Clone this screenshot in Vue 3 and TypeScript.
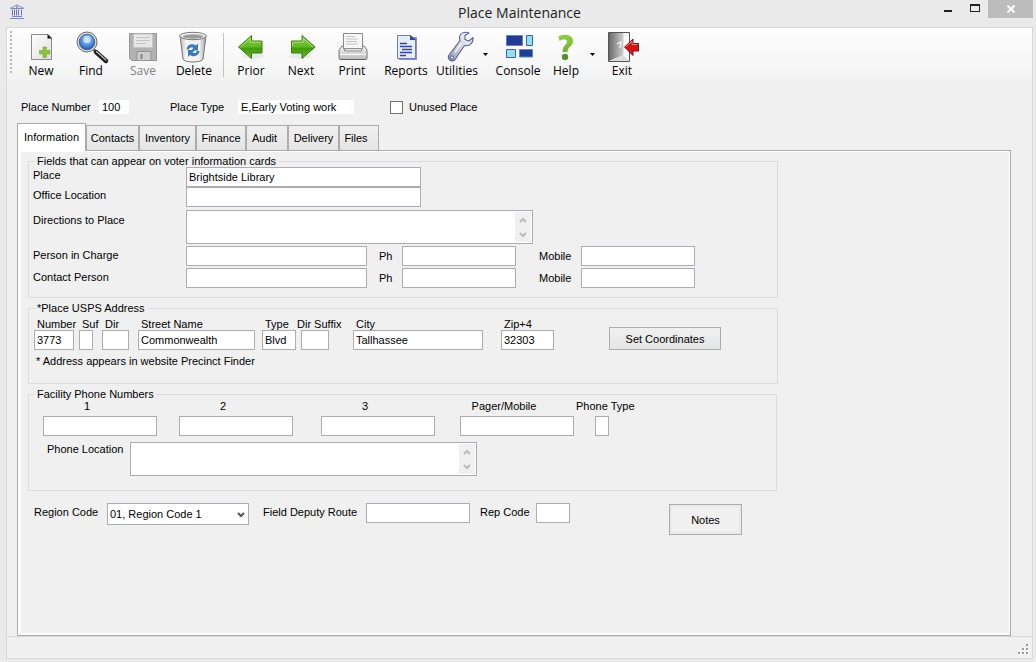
<script setup lang="ts">
import { ref } from 'vue'

interface Tab {
  name: string
  size: string
}

const tabs: Tab[] = [
  { name: 'Information', size: 'w-info' },
  { name: 'Contacts', size: 'w-contacts' },
  { name: 'Inventory', size: 'w-inventory' },
  { name: 'Finance', size: 'w-finance' },
  { name: 'Audit', size: 'w-audit' },
  { name: 'Delivery', size: 'w-delivery' },
  { name: 'Files', size: 'w-files' },
]
const activeTab = ref<string>('Information')

const placeNumber = ref('100')
const placeType = ref('E,Early Voting work')
const unused = ref(false)
const place = ref('Brightside Library')
const office = ref('')
const directions = ref('')
const phoneLocation = ref('')
const region = ref('01, Region Code 1')

const people = [
  { id: 'charge', label: 'Person in Charge' },
  { id: 'contact', label: 'Contact Person' },
]

const address = ref([
  { id: 'number', label: 'Number', value: '3773' },
  { id: 'suf', label: 'Suf', value: '' },
  { id: 'dir', label: 'Dir', value: '' },
  { id: 'street', label: 'Street Name', value: 'Commonwealth' },
  { id: 'type', label: 'Type', value: 'Blvd' },
  { id: 'dirsuffix', label: 'Dir Suffix', value: '' },
  { id: 'city', label: 'City', value: 'Tallhassee' },
  { id: 'zip', label: 'Zip+4', value: '32303' },
])

const phones = [
  { id: 'phone1', label: '1' },
  { id: 'phone2', label: '2' },
  { id: 'phone3', label: '3' },
  { id: 'pager', label: 'Pager/Mobile' },
  { id: 'phonetype', label: 'Phone Type' },
]
</script>

<template>
  <div class="window">
    <header class="titlebar">
      <svg class="app-icon" width="16" height="16" viewBox="0 0 16 16" aria-hidden="true">
        <path d="M1 5.5 8 2l7 3.500M2 5.500h12M3 13.500h10M1 15.500h14" fill="none" stroke="#7f8bc0" stroke-width="1" />
        <path d="M3.500 6.500v6M5.500 6.500v6M7.500 6.500v6M9.500 6.500v6M12.500 6.500v6" stroke="#6674b4" />
        <circle cx="8" cy="4" r="1" fill="#7582ba" />
      </svg>
      <h1>Place Maintenance</h1>
      <div class="win-controls">
        <button type="button" class="win-min" aria-label="Minimize">
          <svg width="8" height="14" viewBox="0 0 8 14"><path d="M0 10h8v2H0z" fill="#222" /></svg>
        </button>
        <button type="button" class="win-max" aria-label="Maximize">
          <svg width="10" height="14" viewBox="0 0 10 14"><path d="M0 4h10v8H0zM1 6v5h8V6z" fill="#222" fill-rule="evenodd" /></svg>
        </button>
        <button type="button" class="win-close" aria-label="Close">
          <svg width="8" height="8" viewBox="0 0 8 8"><path d="M.5.5l7 7M7.500.5l-7 7" stroke="#fff" stroke-width="2" /></svg>
        </button>
      </div>
    </header>

    <div class="frame">
      <nav class="toolbar" aria-label="Main toolbar">
        <span class="grip"></span>
        <button type="button" class="tool">
          <svg viewBox="0 0 32 32">
            <defs>
              <linearGradient id="paper" x1="0" y1="0" x2="1" y2="1"><stop offset="0" stop-color="#fff" /><stop offset="1" stop-color="#dedede" /></linearGradient>
            </defs>
            <path d="M6.500 3.500H23l3.500 3.500v21.500h-20z" fill="url(#paper)" stroke="#8b8b8b" />
            <path d="M22.500 3v4.500H27z" fill="#161616" />
            <path d="M18 16h3.500v3.500H25V23h-3.500v3.500H18V23h-3.500v-3.500H18z" fill="#8cc63f" stroke="#6fa82b" stroke-width=".6" />
          </svg>
          <span>New</span>
        </button>
        <button type="button" class="tool">
          <svg viewBox="0 0 32 32">
            <defs>
              <radialGradient id="lens" cx=".5" cy=".35" r=".65"><stop offset="0" stop-color="#bcdcfa" /><stop offset=".5" stop-color="#5e9be0" /><stop offset="1" stop-color="#1f56a6" /></radialGradient>
            </defs>
            <path d="M18.500 18.500l3 3" stroke="#777" stroke-width="3" />
            <path d="M21 21l10 9" stroke="#1e1e1e" stroke-width="4.400" stroke-linecap="round" />
            <path d="M21.500 20.500l9.500 8.600" stroke="#c6c6c6" stroke-width="1.200" stroke-linecap="round" />
            <circle cx="12" cy="11" r="10" fill="#dcdcdc" stroke="#6d6d6d" />
            <circle cx="12" cy="11" r="7.800" fill="url(#lens)" stroke="#305c9c" stroke-width=".8" />
            <rect x="8.500" y="5" width="7" height="7" rx="2.500" fill="#e3f2ff" opacity=".65" />
          </svg>
          <span>Find</span>
        </button>
        <button type="button" class="tool" disabled>
          <svg viewBox="0 0 32 32">
            <path d="M2.500 2.500h27v27H5l-2.500-2z" fill="#b2b2b2" stroke="#979797" />
            <path d="M6.500 3h19v13.500h-19z" fill="#e7e7e7" stroke="#c6c6c6" />
            <path d="M9 6.500h14M9 9.500h14M9 12.500h10" stroke="#c4c4c4" />
            <path d="M10 20.500h14v9H10z" fill="#cdcdcd" stroke="#949494" />
            <path d="M12.500 22.500h4v6h-4z" fill="#989898" stroke="#e1e1e1" stroke-width=".7" />
          </svg>
          <span>Save</span>
        </button>
        <button type="button" class="tool">
          <svg viewBox="0 0 32 32">
            <defs>
              <linearGradient id="bin"><stop offset="0" stop-color="#bcbcbc" /><stop offset=".25" stop-color="#f6f6f6" /><stop offset=".75" stop-color="#efefef" /><stop offset="1" stop-color="#a5a5a5" /></linearGradient>
            </defs>
            <path d="M2 5l3 23c1 4 19 4 20 0l3-23z" fill="url(#bin)" stroke="#777" />
            <ellipse cx="15" cy="5" rx="13.300" ry="3.700" fill="#f4f4f4" stroke="#777" />
            <ellipse cx="15" cy="5.500" rx="10.500" ry="2.200" fill="#9b9b9b" />
            <path d="M8 15h14l-1 10H9z" fill="#fff" opacity=".7" />
            <path d="M8.500 18.500c.5-5 6-6.500 9.500-4l2-2v7h-7l2.500-2.500c-2-1-4-.5-4.500 1.500zM21.500 20c-.5 5-6 6.500-9.500 4l-2 2v-7h7l-2.500 2.500c2 1 4 .5 4.500-1.500z" fill="#3d78b8" />
          </svg>
          <span>Delete</span>
        </button>
        <span class="divider"></span>
        <button type="button" class="tool">
          <svg viewBox="0 0 32 32">
            <defs>
              <linearGradient id="green" x1="0" y1="0" x2="0" y2="1"><stop offset="0" stop-color="#8bd24a" /><stop offset=".5" stop-color="#62b720" /><stop offset=".55" stop-color="#43980d" /><stop offset="1" stop-color="#62bd22" /></linearGradient>
            </defs>
            <ellipse cx="18" cy="25" rx="11" ry="3" fill="#000" opacity=".06" />
            <path d="M3.500 16 16.500 4.500V10h10.500v12H16.500v5.500z" fill="url(#green)" stroke="#3b7a16" stroke-linejoin="round" />
            <path d="M5.500 16l9.800-8.700V11.200H26" fill="none" stroke="#b9e98e" stroke-width=".8" />
          </svg>
          <span>Prior</span>
        </button>
        <button type="button" class="tool">
          <svg viewBox="0 0 32 32">
            <ellipse cx="15" cy="25" rx="11" ry="3" fill="#000" opacity=".06" />
            <path d="M30 16 17 4.500V10H6.500v12H17v5.500z" fill="url(#green)" stroke="#3b7a16" stroke-linejoin="round" />
            <path d="M28 16l-9.800-8.700V11.200H7.600v4" fill="none" stroke="#b9e98e" stroke-width=".8" />
          </svg>
          <span>Next</span>
        </button>
        <button type="button" class="tool">
          <svg viewBox="0 0 32 32">
            <defs>
              <linearGradient id="printer" x1="0" y1="0" x2="0" y2="1"><stop offset="0" stop-color="#f7f7f7" /><stop offset="1" stop-color="#b9b9b9" /></linearGradient>
            </defs>
            <path d="M6 15h22l3 4v8q0 1.500-1.500 1.500h-25Q3 28.500 3 27v-8z" fill="url(#printer)" stroke="#777" />
            <path d="M7.500 2.500h19V18h-19z" fill="#f7f7f7" stroke="#8a8a8a" />
            <path d="M10 5.500h9M10 8h12M10 10.500h11M10 13h12" stroke="#c4c4c4" />
            <path d="M8.500 17.500h17v2.500h-17z" fill="#e2e2e2" stroke="#8d8d8d" />
            <path d="M4 23.500h26" stroke="#fff" />
            <path d="M4 28.500h26" stroke="#666" />
          </svg>
          <span>Print</span>
        </button>
        <button type="button" class="tool">
          <svg viewBox="0 0 32 32">
            <path d="M9 6h18v23H9z" fill="#8594cc" />
            <path d="M7.500 4.500h13l5 4v19h-18z" fill="#e6ebfa" stroke="#6b7abb" />
            <path d="M20 4v5h6z" fill="#34469a" />
            <path d="M10 12.500h7M10 15.500h12M12 18.500h10M10 21.500h12M10 24.500h6" stroke="#34469a" stroke-width="1.400" />
          </svg>
          <span>Reports</span>
        </button>
        <button type="button" class="tool">
          <svg viewBox="0 0 32 32">
            <defs>
              <linearGradient id="steel" x1="0" y1="1" x2="1" y2="0"><stop offset="0" stop-color="#8f97b4" /><stop offset=".5" stop-color="#d3d5df" /><stop offset="1" stop-color="#fafaff" /></linearGradient>
            </defs>
            <path d="M28 2c-4-2-9.500 0-9.500 5 0 1 .2 2 .5 2.700L7.700 24.500c-1.500 3.500 2.500 7 6 4.500L23.500 14.500c5 1 9-2.500 8.500-8l-4 3.500-4-1.500v-4z" fill="url(#steel)" stroke="#56639c" stroke-width="1.100" stroke-linejoin="round" />
            <circle cx="11" cy="26.500" r="1.600" fill="#fff" stroke="#4b5794" />
            <path d="M20 12.500 14 21.500" stroke="#fff" stroke-width="1.200" />
          </svg>
          <span>Utilities</span>
        </button>
        <button type="button" class="drop" aria-label="Utilities menu"><svg viewBox="0 0 5 3"><path d="M0 0h5L2.500 3z" /></svg></button>
        <button type="button" class="tool">
          <svg viewBox="0 0 32 32">
            <path d="M4.500 4.500h16v10h-16zM17.500 18.500h13v7.500h-13z" fill="#263a94" stroke="#4c8fc6" />
            <path d="M24.500 4.500h6v10h-6zM4.500 18.500h9v8h-9z" fill="#9adcf5" stroke="#2c68ad" />
          </svg>
          <span>Console</span>
        </button>
        <button type="button" class="tool">
          <svg viewBox="0 0 32 32">
            <defs>
              <linearGradient id="help" x1="0" y1="0" x2="0" y2="1"><stop offset="0" stop-color="#93cf45" /><stop offset="1" stop-color="#6fb032" /></linearGradient>
            </defs>
            <path d="M8.500 5.500C13 2.500 23 3 23 10c0 5.500-5.500 5.500-5.500 11h-5c0-7 4.500-7 4.500-10.500 0-2.500-4-2.500-7.500-.5z" fill="url(#help)" />
            <circle cx="15" cy="26" r="3.200" fill="#55902a" />
          </svg>
          <span>Help</span>
        </button>
        <button type="button" class="drop" aria-label="Help menu"><svg viewBox="0 0 5 3"><path d="M0 0h5L2.500 3z" /></svg></button>
        <button type="button" class="tool">
          <svg viewBox="0 0 32 32">
            <defs>
              <linearGradient id="door"><stop offset="0" stop-color="#6a6a6a" /><stop offset="1" stop-color="#cfcfcf" /></linearGradient>
            </defs>
            <path d="M2.500 1.500h21v29h-21z" fill="#fafafa" stroke="#555" />
            <path d="M3 2h14.500v22L3 30z" fill="url(#door)" />
            <path d="M11 13l4-2-1 6" fill="none" stroke="#f2f2f2" stroke-width="1.300" />
            <path d="M17 24 3.500 30h20z" fill="#ddd" />
            <path d="M18.500 16l8.500-8v4.500h5.500v7.500H27v4.500z" fill="#d3151b" stroke="#8d0c10" stroke-linejoin="round" />
            <path d="M20 15.500l6-5.500v3.500h5.500" fill="none" stroke="#f48a8a" stroke-width=".9" />
          </svg>
          <span>Exit</span>
        </button>
      </nav>

      <main>
        <div class="summary">
          <label class="num-label" for="placeNumber">Place Number</label>
          <input id="placeNumber" v-model="placeNumber" class="flat flat-num" readonly />
          <label class="type-label" for="placeType">Place Type</label>
          <input id="placeType" v-model="placeType" class="flat flat-type" readonly />
          <label class="check"><input v-model="unused" type="checkbox" />Unused Place</label>
        </div>

        <div class="tabs" role="tablist">
          <button
            v-for="tab in tabs"
            :key="tab.name"
            type="button"
            role="tab"
            :aria-selected="activeTab === tab.name"
            :class="['tab', tab.size, { active: activeTab === tab.name }]"
            @click="activeTab = tab.name"
          >{{ tab.name }}</button>
        </div>

        <section class="panel" role="tabpanel">
          <fieldset class="cards">
            <legend>Fields that can appear on voter information cards</legend>
            <div class="row">
              <label class="lead" for="place">Place</label>
              <input id="place" v-model="place" class="w-place" />
            </div>
            <div class="row">
              <label class="lead" for="office">Office Location</label>
              <input id="office" v-model="office" class="w-place" />
            </div>
            <div class="row directions">
              <label class="lead" for="directions">Directions to Place</label>
              <div class="memo">
                <textarea id="directions" v-model="directions"></textarea>
                <div class="scroll">
                  <button type="button" aria-label="Scroll up"><svg viewBox="0 0 8 6"><path d="M1 5l3-3 3 3" /></svg></button>
                  <button type="button" aria-label="Scroll down"><svg viewBox="0 0 8 6"><path d="M1 1l3 3 3-3" /></svg></button>
                </div>
              </div>
            </div>
            <div v-for="p in people" :key="p.id" class="row person">
              <label class="lead" :for="p.id">{{ p.label }}</label>
              <input :id="p.id" class="w-person" />
              <label class="ph" :for="p.id + 'Ph'">Ph</label>
              <input :id="p.id + 'Ph'" class="w-phone" />
              <label class="mobile" :for="p.id + 'Mobile'">Mobile</label>
              <input :id="p.id + 'Mobile'" class="w-phone" />
            </div>
          </fieldset>

          <fieldset class="usps">
            <legend>*Place USPS Address</legend>
            <div class="address">
              <div v-for="f in address" :key="f.id" :class="['stack', f.id]">
                <label :for="f.id">{{ f.label }}</label>
                <input :id="f.id" v-model="f.value" />
              </div>
              <button type="button" class="push coords">Set Coordinates</button>
            </div>
            <p>* Address appears in website Precinct Finder</p>
          </fieldset>

          <fieldset class="facility">
            <legend>Facility Phone Numbers</legend>
            <div class="phones">
              <div v-for="f in phones" :key="f.id" :class="['phone', f.id]">
                <label :for="f.id">{{ f.label }}</label>
                <input :id="f.id" />
              </div>
            </div>
            <div class="row location">
              <label for="phoneLocation">Phone Location</label>
              <div class="memo">
                <textarea id="phoneLocation" v-model="phoneLocation"></textarea>
                <div class="scroll">
                  <button type="button" aria-label="Scroll up"><svg viewBox="0 0 8 6"><path d="M1 5l3-3 3 3" /></svg></button>
                  <button type="button" aria-label="Scroll down"><svg viewBox="0 0 8 6"><path d="M1 1l3 3 3-3" /></svg></button>
                </div>
              </div>
            </div>
          </fieldset>

          <div class="bottom">
            <label class="region-label" for="region">Region Code</label>
            <span class="select">
              <select id="region" v-model="region"><option>01, Region Code 1</option></select>
              <svg viewBox="0 0 8 6"><path d="M1 1l3 3 3-3" /></svg>
            </span>
            <label class="route-label" for="route">Field Deputy Route</label>
            <input id="route" class="w-route" />
            <label class="rep-label" for="rep">Rep Code</label>
            <input id="rep" class="w-rep" />
            <button type="button" class="push notes">Notes</button>
          </div>
        </section>
      </main>

      <footer class="status">
        <svg width="12" height="12" viewBox="0 0 12 12" aria-hidden="true">
          <path d="M9 1h2v2H9zM5 5h2v2H5zM9 5h2v2H9zM1 9h2v2H1zM5 9h2v2H5zM9 9h2v2H9z" fill="#fff" />
          <path d="M8 0h2v2H8zM4 4h2v2H4zM8 4h2v2H8zM0 8h2v2H0zM4 8h2v2H4zM8 8h2v2H8z" fill="#9c9c9c" />
        </svg>
      </footer>
    </div>
  </div>
</template>

<style>
html,
body {
  margin: 0;
  background: #eaeaea;
}
</style>

<style scoped>
* {
  box-sizing: border-box;
}
.window {
  display: flex;
  flex-direction: column;
  min-height: 100vh;
  padding: 0 3px 3px 6px;
  background: #eaeaea;
  color: #000;
  font: 11px/12px "Liberation Sans", Arial, sans-serif;
}
button,
input,
select,
textarea {
  margin: 0;
  color: inherit;
  font: inherit;
  border-radius: 0;
}
label,
legend,
.tab {
  white-space: nowrap;
}

/* Title bar */
.titlebar {
  display: grid;
  grid-template-columns: 1fr auto 1fr;
  align-items: start;
  height: 27px;
}
.app-icon {
  margin: 3px 0 0 3px;
}
h1 {
  margin: 0;
  color: #222;
  font: 400 14px/26px "Open Sans", "Noto Sans", sans-serif;
}
.win-controls {
  display: flex;
  justify-content: flex-end;
}
.win-controls button {
  display: flex;
  padding: 0;
  border: 0;
  background: none;
}
.win-min {
  margin-right: 18px;
}
.win-max {
  margin-right: 8px;
}
.win-controls .win-close {
  align-items: center;
  justify-content: center;
  width: 45px;
  height: 18px;
  background: #bcbcbc;
}

/* Framed client area */
.frame {
  display: flex;
  flex: 1;
  flex-direction: column;
  border: 1px solid #d9d9d9;
  background: #f0f0f0;
}
.toolbar {
  display: grid;
  grid-template-columns: 9px 50px 50px 54px 48px 8px 50px 50px 52px 56px 46px 10px 56px 40px 12px 48px;
  height: 58px;
  padding-top: 3px;
  background: linear-gradient(#fdfdfd, #f7f7f7 60%, #f0f0f0);
}
.grip {
  width: 2px;
  height: 44px;
  margin-left: 3px;
  background: repeating-linear-gradient(#b8b8b8 0 2px, transparent 2px 4px);
}
.divider {
  width: 1px;
  height: 44px;
  margin: 2px 0 0 5px;
  background: #c4c4c4;
}
.tool {
  display: flex;
  flex-direction: column;
  align-items: center;
  height: 48px;
  padding: 0;
  border: 0;
  background: none;
  font: 12px/16px "Open Sans", "Noto Sans", sans-serif;
}
.tool svg {
  flex: none;
  width: 32px;
  height: 32px;
  overflow: visible;
}
.tool:disabled {
  color: #838383;
}
.drop {
  display: flex;
  align-items: center;
  justify-content: center;
  height: 46px;
  padding: 0;
  border: 0;
  background: none;
}
.drop svg {
  width: 5px;
  height: 3px;
}

main {
  display: flex;
  flex: 1;
  flex-direction: column;
  padding: 13px 21px 0 10px;
}
.summary {
  display: flex;
  align-items: center;
  height: 16px;
  padding-left: 4px;
}
.flat {
  height: 14px;
  padding: 0 3px;
  border: 0;
  background: #fff;
}
.num-label {
  width: 78px;
}
.flat-num {
  width: 30px;
}
.type-label {
  width: 68px;
  margin-left: 41px;
}
.flat-type {
  width: 116px;
}
.check {
  display: flex;
  gap: 6px;
  align-items: center;
  margin-left: 36px;
}
.check input {
  width: 13px;
  height: 13px;
  border: 1px solid #707070;
  background: #fff;
  appearance: none;
}
.check input:checked {
  box-shadow: inset 0 0 0 2px #fff;
  background: #333;
}

/* Tabs */
.tabs {
  display: flex;
  align-items: flex-end;
  margin-top: 8px;
}
.tab {
  height: 25px;
  padding: 0;
  border: 1px solid #acacac;
  border-bottom: 0;
  background: linear-gradient(#f0f0f0, #e5e5e5);
  text-align: center;
}
.tab.active {
  height: 28px;
  margin-bottom: -1px;
  padding-bottom: 2px;
  background: #fff;
  z-index: 1;
}
.w-info {
  width: 69px;
}
.w-contacts {
  width: 53px;
}
.w-inventory {
  width: 57px;
}
.w-finance {
  width: 50px;
}
.w-audit {
  width: 42px;
  padding-right: 5px;
}
.w-delivery {
  width: 51px;
}
.w-files {
  width: 40px;
  padding-right: 6px;
}
.panel {
  flex: 1;
  padding: 4px 8px 12px 7px;
  border: 1px solid #acacac;
  box-shadow: inset 3px 1px 0 #fff, inset -1px -2px 0 #fff;
}

/* Groups */
fieldset {
  min-width: 0;
  max-width: 750px;
  margin: 0 0 4px 3px;
  padding: 0 4px;
  border: 1px solid #dcdcdc;
}
legend {
  margin-left: 2px;
  padding: 0 2px;
}
fieldset input,
.bottom input {
  height: 20px;
  padding: 0 2px;
  border: 1px solid #abadb3;
  background: #fff;
}
.row {
  display: flex;
  align-items: center;
}
.lead {
  align-self: flex-start;
  width: 153px;
  line-height: 16px;
}
.w-place {
  width: 235px;
}
.directions {
  margin-top: 3px;
}
.directions .lead {
  line-height: 20px;
}
.memo {
  display: flex;
  width: 347px;
  height: 34px;
  padding: 1px;
  border: 1px solid #abadb3;
  background: #fff;
}
textarea {
  flex: 1;
  min-width: 0;
  padding: 1px;
  border: 0;
  background: none;
  resize: none;
}
.scroll {
  display: flex;
  flex-direction: column;
  width: 16px;
  background: #f0f0f0;
}
.scroll button {
  display: flex;
  flex: 1;
  align-items: center;
  justify-content: center;
  padding: 0;
  border: 0;
  background: none;
}
.scroll svg,
.select svg {
  width: 8px;
  height: 6px;
  fill: none;
  stroke: #bcbcbc;
  stroke-width: 2;
}
.person {
  margin-top: 2px;
}
.person .lead {
  line-height: 18px;
}
.person:last-child {
  margin-bottom: 9px;
}
.w-person {
  width: 181px;
}
.ph {
  width: 35px;
  padding-left: 12px;
}
.mobile {
  width: 65px;
  padding-left: 23px;
}
.w-phone {
  width: 114px;
}

/* Address */
.address {
  display: grid;
  grid-template-columns: 45px 23px 36px 124px 35px 56px 148px 108px 112px;
  margin: 4px 0 0 1px;
}
.stack {
  display: flex;
  flex-direction: column;
}
.stack label {
  padding-left: 3px;
}
.number input {
  width: 40px;
}
.suf input {
  width: 14px;
}
.dir input {
  width: 27px;
}
.street input {
  width: 117px;
}
.type input {
  width: 34px;
}
.dirsuffix label {
  padding-left: 0;
}
.dirsuffix input {
  width: 28px;
  margin-left: 4px;
}
.city input {
  width: 130px;
}
.zip input {
  width: 53px;
}
.push {
  padding: 0;
  border: 1px solid #acacac;
  background: linear-gradient(#f0f0f0, #e5e5e5);
}
.coords {
  align-self: end;
  height: 23px;
}
p {
  margin: 5px 0 16px 3px;
}

/* Phones */
.facility {
  max-width: 749px;
}
.phones {
  display: grid;
  grid-template-columns: 136px 142px 139px 116px 56px;
  padding-left: 10px;
}
.phone {
  display: flex;
  flex-direction: column;
  gap: 4px;
}
.phone label {
  width: 88px;
  text-align: center;
}
.phone input {
  width: 114px;
}
.phone.phonetype label {
  width: 56px;
}
.phone.phonetype input {
  width: 14px;
  margin-left: 19px;
}
.location {
  align-items: flex-start;
  margin: 6px 0 14px 14px;
}
.location label {
  width: 83px;
  line-height: 14px;
}

.bottom {
  display: flex;
  align-items: flex-start;
  margin: 12px 0 0 9px;
}
.bottom label {
  line-height: 18px;
}
.region-label {
  width: 73px;
}
.select {
  position: relative;
  display: flex;
}
.select select {
  width: 142px;
  height: 22px;
  padding: 0 2px;
  border: 1px solid #abadb3;
  background: #fff;
  appearance: none;
}
.select svg {
  position: absolute;
  top: 9px;
  right: 4px;
  stroke: #555;
  pointer-events: none;
}
.route-label {
  width: 103px;
  margin-left: 14px;
}
.w-route {
  width: 104px;
}
.rep-label {
  width: 56px;
  margin-left: 10px;
}
.w-rep {
  width: 34px;
}
.notes {
  width: 73px;
  height: 31px;
  margin: 1px 0 0 99px;
  background: #f0f0f0;
  box-shadow: inset 0 0 0 2px #eaeaea;
}

.status {
  display: flex;
  align-items: flex-end;
  justify-content: flex-end;
  height: 22px;
  padding: 0 2px 2px 0;
  border-top: 1px solid #d7d7d7;
}
</style>
